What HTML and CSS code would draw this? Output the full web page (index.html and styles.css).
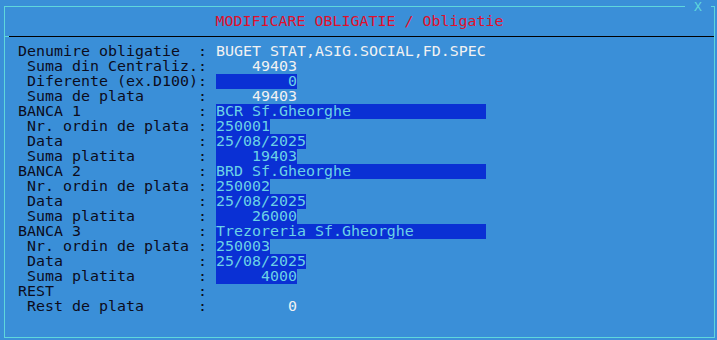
FILE: index.html
```html
<!DOCTYPE html>
<html lang="ro">
<head>
<meta charset="UTF-8">
<title>Modificare obligatie</title>
<link rel="stylesheet" href="styles.css">
</head>
<body>

<div class="window">
    <div class="close">X</div>

    <!-- Title -->
    <div class="title">MODIFICARE OBLIGATIE / Obligatie</div>
    <div class="sep">
        <span class="tick"></span>
        <span class="rule"></span>
        <span class="tick right"></span>
    </div>

    <!-- Form rows -->
    <div class="form">
        <div class="row">
            <span class="label">Denumire obligatie</span><span class="colon">:</span>
            <span class="value text">BUGET STAT,ASIG.SOCIAL,FD.SPEC</span>
        </div>
        <div class="row">
            <span class="label sub">Suma din Centraliz.</span><span class="colon">:</span>
            <span class="value num">49403</span>
        </div>
        <div class="row">
            <span class="label sub">Diferente (ex.D100)</span><span class="colon">:</span>
            <span class="value num bar">0</span>
        </div>
        <div class="row">
            <span class="label sub">Suma de plata</span><span class="colon">:</span>
            <span class="value num">49403</span>
        </div>

        <div class="row">
            <span class="label">BANCA 1</span><span class="colon">:</span>
            <span class="value name bar">BCR Sf.Gheorghe</span>
        </div>
        <div class="row">
            <span class="label sub">Nr. ordin de plata</span><span class="colon">:</span>
            <span class="value op bar">250001</span>
        </div>
        <div class="row">
            <span class="label sub">Data</span><span class="colon">:</span>
            <span class="value date bar">25/08/2025</span>
        </div>
        <div class="row">
            <span class="label sub">Suma platita</span><span class="colon">:</span>
            <span class="value num bar">19403</span>
        </div>

        <div class="row">
            <span class="label">BANCA 2</span><span class="colon">:</span>
            <span class="value name bar">BRD Sf.Gheorghe</span>
        </div>
        <div class="row">
            <span class="label sub">Nr. ordin de plata</span><span class="colon">:</span>
            <span class="value op bar">250002</span>
        </div>
        <div class="row">
            <span class="label sub">Data</span><span class="colon">:</span>
            <span class="value date bar">25/08/2025</span>
        </div>
        <div class="row">
            <span class="label sub">Suma platita</span><span class="colon">:</span>
            <span class="value num bar">26000</span>
        </div>

        <div class="row">
            <span class="label">BANCA 3</span><span class="colon">:</span>
            <span class="value name bar">Trezoreria Sf.Gheorghe</span>
        </div>
        <div class="row">
            <span class="label sub">Nr. ordin de plata</span><span class="colon">:</span>
            <span class="value op bar">250003</span>
        </div>
        <div class="row">
            <span class="label sub">Data</span><span class="colon">:</span>
            <span class="value date bar">25/08/2025</span>
        </div>
        <div class="row">
            <span class="label sub">Suma platita</span><span class="colon">:</span>
            <span class="value num bar">4000</span>
        </div>

        <div class="row">
            <span class="label">REST</span><span class="colon">:</span>
            <span class="value"></span>
        </div>
        <div class="row">
            <span class="label sub">Rest de plata</span><span class="colon">:</span>
            <span class="value num">0</span>
        </div>
    </div>
</div>

</body>
</html>
```

FILE: styles.css
```css
body {
    margin: 0;
    width: 717px;
    height: 340px;
    background-color: #3a8fd8;
    font-family: "DejaVu Sans Mono", "Liberation Mono", monospace;
    font-size: 14.95px;
    overflow: hidden;
}

.window {
    position: relative;
    margin: 6px 0 0 4px;
    width: 709px;
    height: 330px;
    border: 1px solid #5fd6dc;
}

.close {
    position: absolute;
    top: -7px;
    left: 680px;
    width: 26px;
    height: 13px;
    background-color: #3a8fd8;
    color: #5fd6dc;
    font-size: 13px;
    line-height: 13px;
    text-align: center;
}

.title {
    height: 29px;
    line-height: 28px;
    text-align: center;
    color: #e0102c;
}

.sep {
    display: flex;
    height: 1px;
}

.tick {
    width: 4px;
    background-color: #5fd6dc;
}

.tick.right {
    width: 2px;
    background-color: #000;
}

.rule {
    flex: 1;
    background-color: #000;
}

.form {
    padding: 7px 0 0 13px;
}

.row {
    display: grid;
    grid-template-columns: 180px 18px auto;
    height: 15px;
    line-height: 15px;
    color: #0c0c1c;
}

.label.sub {
    padding-left: 9px;
}

.value {
    justify-self: start;
    white-space: pre;
    color: #f2f2f2;
}

.num {
    width: 81px;
    text-align: right;
}

.name {
    width: 270px;
}

.op {
    width: 54px;
}

.date {
    width: 90px;
}

.bar {
    background-color: #0a30d4;
    color: #6cd2e6;
}
```
